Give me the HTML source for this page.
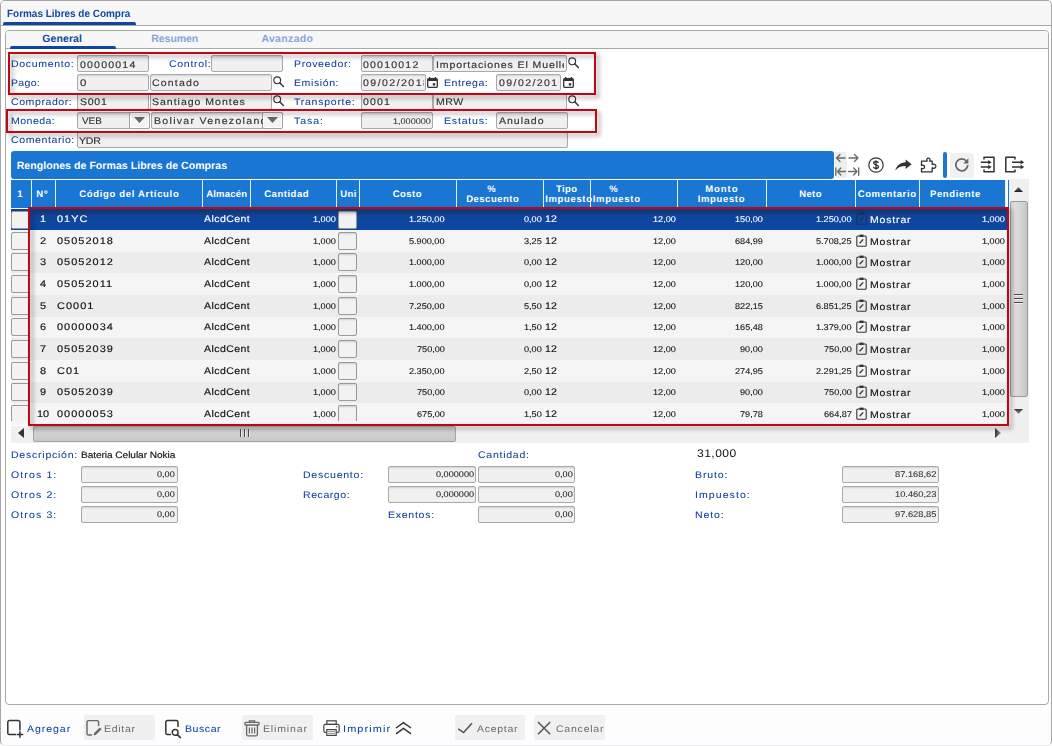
<!DOCTYPE html>
<html><head><meta charset="utf-8"><title>Formas Libres de Compra</title>
<style>
html,body{margin:0;padding:0}
body{width:1052px;height:746px;position:relative;overflow:hidden;background:#fdfdfd;font-family:"Liberation Sans",sans-serif}
div,span.t,svg{position:absolute;box-sizing:border-box}
span.t{white-space:pre;transform-origin:0 0;text-rendering:geometricPrecision}
.cl{overflow:hidden}
.in{background:#f0f0f0;border:1px solid #a9a9a9;border-radius:2px;box-shadow:inset 0 2px 2px -1px rgba(0,0,0,.13)}
.red{border:2px solid #be0712;filter:drop-shadow(3px 3px 2px rgba(0,0,0,.38))}
.btn{background:#f0f0f0;border-radius:2px}

</style></head>
<body>
<div class="" style="left:0px;top:0px;width:1052px;height:746px;border:1px solid #a6a6a6;border-bottom-color:#e6e9ee;border-radius:5px;background:#fdfdfd"></div>
<div class="" style="left:1px;top:1px;width:1050px;height:24px;background:#f7f7f7;border-radius:4px 4px 0 0"></div>
<div class="" style="left:1px;top:25px;width:1050px;height:1px;background:#a6a6a6"></div>
<div class="" style="left:1px;top:26px;width:1050px;height:679px;background:#fff"></div>
<div class="" style="left:3px;top:22px;width:133px;height:3px;background:#0d47a1;border-radius:2px 2px 0 0"></div>
<div class="" style="left:5px;top:30px;width:1044px;height:675px;border:1px solid #a9a9a9;border-radius:4px;background:#fff"></div>
<div class="" style="left:6px;top:31px;width:1042px;height:17px;background:#f7f7f7;border-radius:3px 3px 0 0"></div>
<div class="" style="left:6px;top:48px;width:1042px;height:1px;background:#a9a9a9"></div>
<div class="" style="left:10px;top:46px;width:106px;height:3px;background:#0d47a1;border-radius:2px 2px 0 0"></div>
<div class="in" style="left:77px;top:55px;width:72px;height:17px;"></div>
<div class="in" style="left:211px;top:55px;width:72px;height:17px;"></div>
<div class="in" style="left:361px;top:55px;width:72px;height:17px;"></div>
<div class="in" style="left:433px;top:55px;width:134px;height:17px;"></div>
<div class="in" style="left:77px;top:74px;width:72px;height:17px;"></div>
<div class="in" style="left:150px;top:74px;width:122px;height:17px;"></div>
<div class="in" style="left:361px;top:74px;width:65px;height:17px;"></div>
<div class="in" style="left:496px;top:74px;width:65px;height:17px;"></div>
<div class="in" style="left:77px;top:93px;width:72px;height:17px;"></div>
<div class="in" style="left:150px;top:93px;width:122px;height:17px;"></div>
<div class="in" style="left:361px;top:93px;width:72px;height:17px;"></div>
<div class="in" style="left:433px;top:93px;width:134px;height:17px;"></div>
<div class="in" style="left:77px;top:112px;width:73px;height:17px;"></div>
<div class="in" style="left:151px;top:112px;width:132px;height:17px;"></div>
<div class="in" style="left:361px;top:112px;width:72px;height:17px;"></div>
<div class="in" style="left:496px;top:112px;width:72px;height:17px;"></div>
<div class="in" style="left:77px;top:131px;width:491px;height:17px;"></div>
<div class="" style="left:129px;top:112px;width:21px;height:17px;background:#f4f4f4;border:1px solid #a0a0a0;border-radius:2px;box-shadow:inset 0 0 0 1px #fff"></div>
<svg style="left:134px;top:117px" width="11" height="6" viewBox="0 0 11 6"><path d="M0 0H11L5.5 6Z" fill="#666"/></svg>
<div class="" style="left:262px;top:112px;width:21px;height:17px;background:#f4f4f4;border:1px solid #a0a0a0;border-radius:2px;box-shadow:inset 0 0 0 1px #fff"></div>
<svg style="left:267px;top:117px" width="11" height="6" viewBox="0 0 11 6"><path d="M0 0H11L5.5 6Z" fill="#666"/></svg>
<div class="" style="left:11px;top:151px;width:823px;height:28px;background:#1976d2;border-radius:3px"></div>
<div class="" style="left:11px;top:180px;width:995px;height:28px;background:#1976d2"></div>
<div class="" style="left:31px;top:180px;width:1px;height:28px;background:#e3eefa"></div>
<div class="" style="left:55px;top:180px;width:1px;height:28px;background:#e3eefa"></div>
<div class="" style="left:202px;top:180px;width:1px;height:28px;background:#e3eefa"></div>
<div class="" style="left:250px;top:180px;width:1px;height:28px;background:#e3eefa"></div>
<div class="" style="left:336px;top:180px;width:1px;height:28px;background:#e3eefa"></div>
<div class="" style="left:359px;top:180px;width:1px;height:28px;background:#e3eefa"></div>
<div class="" style="left:456px;top:180px;width:1px;height:28px;background:#e3eefa"></div>
<div class="" style="left:543px;top:180px;width:1px;height:28px;background:#e3eefa"></div>
<div class="" style="left:590px;top:180px;width:1px;height:28px;background:#e3eefa"></div>
<div class="" style="left:677px;top:180px;width:1px;height:28px;background:#e3eefa"></div>
<div class="" style="left:766px;top:180px;width:1px;height:28px;background:#e3eefa"></div>
<div class="" style="left:855px;top:180px;width:1px;height:28px;background:#e3eefa"></div>
<div class="" style="left:919px;top:180px;width:1px;height:28px;background:#e3eefa"></div>
<div class="" style="left:1005px;top:180px;width:1px;height:28px;background:#e3eefa"></div>
<div class="" style="left:1008px;top:180px;width:1px;height:28px;background:#1976d2"></div>
<div class="" style="left:11px;top:209px;width:997px;height:21px;background:linear-gradient(#153f8b,#0d47a1 55%,#0d47a1)"></div>
<div class="" style="left:11px;top:210.5px;width:19px;height:18.0px;background:#f2f2f2;border:1px solid #999;border-radius:2px"></div>
<div class="" style="left:338px;top:210.5px;width:19px;height:18.0px;background:#f2f2f2;border:1px solid #999;border-radius:2px;box-shadow:inset 0 2px 2px -1px rgba(0,0,0,.15)"></div>
<svg style="left:856px;top:212px" width="11" height="13" viewBox="0 0 11 13" fill="none" stroke="#1d2f55" stroke-width="1.1"><rect x="0.8" y="2" width="9.4" height="10.2" rx="1"/><rect x="3.5" y="0.6" width="4" height="2.4" fill="#1d2f55" stroke="none"/><path d="M3.6 9.2L7.2 5.4" stroke-width="1.3"/></svg>
<div class="" style="left:11px;top:230px;width:997px;height:21.5px;background:#f5f5f5"></div>
<div class="" style="left:11px;top:231.5px;width:19px;height:18.0px;background:#f2f2f2;border:1px solid #999;border-radius:2px"></div>
<div class="" style="left:338px;top:231.5px;width:19px;height:18.0px;background:#f2f2f2;border:1px solid #999;border-radius:2px;box-shadow:inset 0 2px 2px -1px rgba(0,0,0,.15)"></div>
<svg style="left:856px;top:234px" width="11" height="13" viewBox="0 0 11 13" fill="none" stroke="#333" stroke-width="1.1"><rect x="0.8" y="2" width="9.4" height="10.2" rx="1"/><rect x="3.5" y="0.6" width="4" height="2.4" fill="#333" stroke="none"/><path d="M3.6 9.2L7.2 5.4" stroke-width="1.3"/></svg>
<div class="" style="left:11px;top:251.5px;width:997px;height:21.5px;background:#ececec"></div>
<div class="" style="left:11px;top:253.0px;width:19px;height:18.0px;background:#f2f2f2;border:1px solid #999;border-radius:2px"></div>
<div class="" style="left:338px;top:253.0px;width:19px;height:18.0px;background:#f2f2f2;border:1px solid #999;border-radius:2px;box-shadow:inset 0 2px 2px -1px rgba(0,0,0,.15)"></div>
<svg style="left:856px;top:255px" width="11" height="13" viewBox="0 0 11 13" fill="none" stroke="#333" stroke-width="1.1"><rect x="0.8" y="2" width="9.4" height="10.2" rx="1"/><rect x="3.5" y="0.6" width="4" height="2.4" fill="#333" stroke="none"/><path d="M3.6 9.2L7.2 5.4" stroke-width="1.3"/></svg>
<div class="" style="left:11px;top:273px;width:997px;height:22px;background:#f5f5f5"></div>
<div class="" style="left:11px;top:274.5px;width:19px;height:18.0px;background:#f2f2f2;border:1px solid #999;border-radius:2px"></div>
<div class="" style="left:338px;top:274.5px;width:19px;height:18.0px;background:#f2f2f2;border:1px solid #999;border-radius:2px;box-shadow:inset 0 2px 2px -1px rgba(0,0,0,.15)"></div>
<svg style="left:856px;top:277px" width="11" height="13" viewBox="0 0 11 13" fill="none" stroke="#333" stroke-width="1.1"><rect x="0.8" y="2" width="9.4" height="10.2" rx="1"/><rect x="3.5" y="0.6" width="4" height="2.4" fill="#333" stroke="none"/><path d="M3.6 9.2L7.2 5.4" stroke-width="1.3"/></svg>
<div class="" style="left:11px;top:295px;width:997px;height:21.5px;background:#ececec"></div>
<div class="" style="left:11px;top:296.5px;width:19px;height:18.0px;background:#f2f2f2;border:1px solid #999;border-radius:2px"></div>
<div class="" style="left:338px;top:296.5px;width:19px;height:18.0px;background:#f2f2f2;border:1px solid #999;border-radius:2px;box-shadow:inset 0 2px 2px -1px rgba(0,0,0,.15)"></div>
<svg style="left:856px;top:299px" width="11" height="13" viewBox="0 0 11 13" fill="none" stroke="#333" stroke-width="1.1"><rect x="0.8" y="2" width="9.4" height="10.2" rx="1"/><rect x="3.5" y="0.6" width="4" height="2.4" fill="#333" stroke="none"/><path d="M3.6 9.2L7.2 5.4" stroke-width="1.3"/></svg>
<div class="" style="left:11px;top:316.5px;width:997px;height:21.5px;background:#f5f5f5"></div>
<div class="" style="left:11px;top:318.0px;width:19px;height:18.0px;background:#f2f2f2;border:1px solid #999;border-radius:2px"></div>
<div class="" style="left:338px;top:318.0px;width:19px;height:18.0px;background:#f2f2f2;border:1px solid #999;border-radius:2px;box-shadow:inset 0 2px 2px -1px rgba(0,0,0,.15)"></div>
<svg style="left:856px;top:320px" width="11" height="13" viewBox="0 0 11 13" fill="none" stroke="#333" stroke-width="1.1"><rect x="0.8" y="2" width="9.4" height="10.2" rx="1"/><rect x="3.5" y="0.6" width="4" height="2.4" fill="#333" stroke="none"/><path d="M3.6 9.2L7.2 5.4" stroke-width="1.3"/></svg>
<div class="" style="left:11px;top:338px;width:997px;height:22px;background:#ececec"></div>
<div class="" style="left:11px;top:339.5px;width:19px;height:18.0px;background:#f2f2f2;border:1px solid #999;border-radius:2px"></div>
<div class="" style="left:338px;top:339.5px;width:19px;height:18.0px;background:#f2f2f2;border:1px solid #999;border-radius:2px;box-shadow:inset 0 2px 2px -1px rgba(0,0,0,.15)"></div>
<svg style="left:856px;top:342px" width="11" height="13" viewBox="0 0 11 13" fill="none" stroke="#333" stroke-width="1.1"><rect x="0.8" y="2" width="9.4" height="10.2" rx="1"/><rect x="3.5" y="0.6" width="4" height="2.4" fill="#333" stroke="none"/><path d="M3.6 9.2L7.2 5.4" stroke-width="1.3"/></svg>
<div class="" style="left:11px;top:360px;width:997px;height:21.5px;background:#f5f5f5"></div>
<div class="" style="left:11px;top:361.5px;width:19px;height:18.0px;background:#f2f2f2;border:1px solid #999;border-radius:2px"></div>
<div class="" style="left:338px;top:361.5px;width:19px;height:18.0px;background:#f2f2f2;border:1px solid #999;border-radius:2px;box-shadow:inset 0 2px 2px -1px rgba(0,0,0,.15)"></div>
<svg style="left:856px;top:364px" width="11" height="13" viewBox="0 0 11 13" fill="none" stroke="#333" stroke-width="1.1"><rect x="0.8" y="2" width="9.4" height="10.2" rx="1"/><rect x="3.5" y="0.6" width="4" height="2.4" fill="#333" stroke="none"/><path d="M3.6 9.2L7.2 5.4" stroke-width="1.3"/></svg>
<div class="" style="left:11px;top:381.5px;width:997px;height:21.5px;background:#ececec"></div>
<div class="" style="left:11px;top:383.0px;width:19px;height:18.0px;background:#f2f2f2;border:1px solid #999;border-radius:2px"></div>
<div class="" style="left:338px;top:383.0px;width:19px;height:18.0px;background:#f2f2f2;border:1px solid #999;border-radius:2px;box-shadow:inset 0 2px 2px -1px rgba(0,0,0,.15)"></div>
<svg style="left:856px;top:385px" width="11" height="13" viewBox="0 0 11 13" fill="none" stroke="#333" stroke-width="1.1"><rect x="0.8" y="2" width="9.4" height="10.2" rx="1"/><rect x="3.5" y="0.6" width="4" height="2.4" fill="#333" stroke="none"/><path d="M3.6 9.2L7.2 5.4" stroke-width="1.3"/></svg>
<div class="" style="left:11px;top:403px;width:997px;height:21.5px;background:#f5f5f5"></div>
<div class="" style="left:11px;top:404.5px;width:19px;height:16.5px;background:#f2f2f2;border:1px solid #999;border-radius:2px;border-bottom:0;border-radius:2px 2px 0 0"></div>
<div class="" style="left:338px;top:404.5px;width:19px;height:16.5px;background:#f2f2f2;border:1px solid #999;border-radius:2px;box-shadow:inset 0 2px 2px -1px rgba(0,0,0,.15);border-bottom:0;border-radius:2px 2px 0 0"></div>
<svg style="left:856px;top:407px" width="11" height="13" viewBox="0 0 11 13" fill="none" stroke="#333" stroke-width="1.1"><rect x="0.8" y="2" width="9.4" height="10.2" rx="1"/><rect x="3.5" y="0.6" width="4" height="2.4" fill="#333" stroke="none"/><path d="M3.6 9.2L7.2 5.4" stroke-width="1.3"/></svg>
<div class="" style="left:1009px;top:179px;width:20px;height:264px;background:#f0f0f0"></div>
<div class="" style="left:1009.5px;top:201px;width:18.5px;height:196px;background:linear-gradient(90deg,#cfcfcf,#dedede 25%,#dadada 35%,#d2d2d2 70%,#c2c2c2);border:1px solid #9c9c9c;border-radius:2px"></div>
<svg style="left:1014px;top:187px" width="9" height="5" viewBox="0 0 9 5"><defs><linearGradient id="ga" x1="0" y1="0" x2="0" y2="1"><stop offset="0" stop-color="#777"/><stop offset="1" stop-color="#1a1a1a"/></linearGradient></defs><path d="M0 5H9L4.5 0Z" fill="url(#ga)"/></svg>
<svg style="left:1014px;top:409px" width="9" height="5" viewBox="0 0 9 5"><defs><linearGradient id="gb" x1="0" y1="0" x2="0" y2="1"><stop offset="0" stop-color="#333"/><stop offset="1" stop-color="#999"/></linearGradient></defs><path d="M0 0H9L4.5 5Z" fill="url(#gb)"/></svg>
<div class="" style="left:1014px;top:293.5px;width:9px;height:1.0px;background:#4a4a4a"></div>
<div class="" style="left:1014px;top:294.5px;width:9px;height:1.0px;background:#eee"></div>
<div class="" style="left:1014px;top:297.5px;width:9px;height:1.0px;background:#4a4a4a"></div>
<div class="" style="left:1014px;top:298.5px;width:9px;height:1.0px;background:#eee"></div>
<div class="" style="left:1014px;top:301.5px;width:9px;height:1.0px;background:#4a4a4a"></div>
<div class="" style="left:1014px;top:302.5px;width:9px;height:1.0px;background:#eee"></div>
<div class="" style="left:11px;top:426px;width:998px;height:17px;background:#f0f0f0"></div>
<div class="" style="left:33px;top:426px;width:423px;height:15.5px;background:linear-gradient(#c4c4c4,#d2d2d2 35%,#cecece 60%,#c8c8c8);border:1px solid #a4a4a4;border-radius:2px"></div>
<div class="" style="left:239.5px;top:428.5px;width:1.0px;height:8.0px;background:#4a4a4a"></div>
<div class="" style="left:240.5px;top:428.5px;width:1.0px;height:8.0px;background:#e8e8e8"></div>
<div class="" style="left:243.5px;top:428.5px;width:1.0px;height:8.0px;background:#4a4a4a"></div>
<div class="" style="left:244.5px;top:428.5px;width:1.0px;height:8.0px;background:#e8e8e8"></div>
<div class="" style="left:247.5px;top:428.5px;width:1.0px;height:8.0px;background:#4a4a4a"></div>
<div class="" style="left:248.5px;top:428.5px;width:1.0px;height:8.0px;background:#e8e8e8"></div>
<svg style="left:18px;top:428px" width="6" height="10" viewBox="0 0 6 10"><path d="M6 0V10L0 5Z" fill="#333"/></svg>
<svg style="left:994.5px;top:428px" width="6" height="10" viewBox="0 0 6 10"><defs><linearGradient id="gc" x1="0" y1="0" x2="1" y2="0"><stop offset="0" stop-color="#333"/><stop offset="1" stop-color="#999"/></linearGradient></defs><path d="M0 0V10L6 5Z" fill="url(#gc)"/></svg>
<div class="in" style="left:81px;top:466px;width:97px;height:17px;"></div>
<div class="in" style="left:478px;top:466px;width:97px;height:17px;"></div>
<div class="in" style="left:842px;top:466px;width:97px;height:17px;"></div>
<div class="in" style="left:81px;top:486px;width:97px;height:17px;"></div>
<div class="in" style="left:478px;top:486px;width:97px;height:17px;"></div>
<div class="in" style="left:842px;top:486px;width:97px;height:17px;"></div>
<div class="in" style="left:81px;top:506px;width:97px;height:17px;"></div>
<div class="in" style="left:478px;top:506px;width:97px;height:17px;"></div>
<div class="in" style="left:842px;top:506px;width:97px;height:17px;"></div>
<div class="in" style="left:388px;top:466px;width:88px;height:17px;"></div>
<div class="in" style="left:388px;top:486px;width:88px;height:17px;"></div>
<div class="btn" style="left:84px;top:715px;width:71px;height:25px;"></div>
<div class="btn" style="left:242px;top:715px;width:71px;height:25px;"></div>
<div class="btn" style="left:455px;top:715px;width:70px;height:25px;"></div>
<div class="btn" style="left:534px;top:715px;width:71px;height:25px;"></div>
<span class="t" style="left:7.20px;top:6.86px;font-size:10.5px;line-height:14.5px;color:#0d47a1;font-weight:bold;transform:scaleX(0.9476);">Formas Libres de Compra</span>
<span class="t" style="left:42.20px;top:31.86px;font-size:10.5px;line-height:14.5px;color:#0d47a1;font-weight:bold;letter-spacing:0.115px;">General</span>
<span class="t" style="left:151.30px;top:31.86px;font-size:10.5px;line-height:14.5px;color:#86a4d9;font-weight:bold;letter-spacing:-0.061px;">Resumen</span>
<span class="t" style="left:261.40px;top:31.86px;font-size:10.5px;line-height:14.5px;color:#86a4d9;font-weight:bold;letter-spacing:0.340px;">Avanzado</span>
<span class="t" style="left:11.00px;top:57.62px;font-size:9.6px;line-height:13.6px;color:#123f9c;-webkit-text-stroke:0.06px #123f9c;letter-spacing:0.595px;transform:scaleX(1.1000);">Documento:</span>
<span class="t" style="left:11.00px;top:76.62px;font-size:9.6px;line-height:13.6px;color:#123f9c;-webkit-text-stroke:0.06px #123f9c;letter-spacing:0.276px;transform:scaleX(1.1000);">Pago:</span>
<span class="t" style="left:11.00px;top:95.62px;font-size:9.6px;line-height:13.6px;color:#123f9c;-webkit-text-stroke:0.06px #123f9c;letter-spacing:0.513px;transform:scaleX(1.1000);">Comprador:</span>
<span class="t" style="left:11.00px;top:114.62px;font-size:9.6px;line-height:13.6px;color:#123f9c;-webkit-text-stroke:0.06px #123f9c;letter-spacing:0.412px;transform:scaleX(1.1000);">Moneda:</span>
<span class="t" style="left:11.00px;top:133.62px;font-size:9.6px;line-height:13.6px;color:#123f9c;-webkit-text-stroke:0.06px #123f9c;letter-spacing:0.528px;transform:scaleX(1.1000);">Comentario:</span>
<span class="t" style="left:168.80px;top:57.62px;font-size:9.6px;line-height:13.6px;color:#123f9c;-webkit-text-stroke:0.06px #123f9c;letter-spacing:0.629px;transform:scaleX(1.1000);">Control:</span>
<span class="t" style="left:294.00px;top:57.62px;font-size:9.6px;line-height:13.6px;color:#123f9c;-webkit-text-stroke:0.06px #123f9c;letter-spacing:0.547px;transform:scaleX(1.1000);">Proveedor:</span>
<span class="t" style="left:294.00px;top:76.62px;font-size:9.6px;line-height:13.6px;color:#123f9c;-webkit-text-stroke:0.06px #123f9c;letter-spacing:0.529px;transform:scaleX(1.1000);">Emisión:</span>
<span class="t" style="left:294.00px;top:95.62px;font-size:9.6px;line-height:13.6px;color:#123f9c;-webkit-text-stroke:0.06px #123f9c;letter-spacing:0.657px;transform:scaleX(1.1000);">Transporte:</span>
<span class="t" style="left:294.00px;top:114.62px;font-size:9.6px;line-height:13.6px;color:#123f9c;-webkit-text-stroke:0.06px #123f9c;letter-spacing:0.868px;transform:scaleX(1.1000);">Tasa:</span>
<span class="t" style="left:444.00px;top:76.62px;font-size:9.6px;line-height:13.6px;color:#123f9c;-webkit-text-stroke:0.06px #123f9c;letter-spacing:0.505px;transform:scaleX(1.1000);">Entrega:</span>
<span class="t" style="left:444.00px;top:114.62px;font-size:9.6px;line-height:13.6px;color:#123f9c;-webkit-text-stroke:0.06px #123f9c;letter-spacing:0.735px;transform:scaleX(1.1000);">Estatus:</span>
<span class="t" style="left:11.00px;top:448.62px;font-size:9.6px;line-height:13.6px;color:#123f9c;-webkit-text-stroke:0.06px #123f9c;letter-spacing:0.680px;transform:scaleX(1.1000);">Descripción:</span>
<span class="t" style="left:11.00px;top:468.62px;font-size:9.6px;line-height:13.6px;color:#123f9c;-webkit-text-stroke:0.06px #123f9c;letter-spacing:1.008px;transform:scaleX(1.1000);">Otros 1:</span>
<span class="t" style="left:11.00px;top:488.62px;font-size:9.6px;line-height:13.6px;color:#123f9c;-webkit-text-stroke:0.06px #123f9c;letter-spacing:1.008px;transform:scaleX(1.1000);">Otros 2:</span>
<span class="t" style="left:11.00px;top:508.62px;font-size:9.6px;line-height:13.6px;color:#123f9c;-webkit-text-stroke:0.06px #123f9c;letter-spacing:1.008px;transform:scaleX(1.1000);">Otros 3:</span>
<span class="t" style="left:302.70px;top:468.62px;font-size:9.6px;line-height:13.6px;color:#123f9c;-webkit-text-stroke:0.06px #123f9c;letter-spacing:0.678px;transform:scaleX(1.1000);">Descuento:</span>
<span class="t" style="left:302.70px;top:488.62px;font-size:9.6px;line-height:13.6px;color:#123f9c;-webkit-text-stroke:0.06px #123f9c;letter-spacing:0.489px;transform:scaleX(1.1000);">Recargo:</span>
<span class="t" style="left:387.70px;top:508.62px;font-size:9.6px;line-height:13.6px;color:#123f9c;-webkit-text-stroke:0.06px #123f9c;letter-spacing:0.652px;transform:scaleX(1.1000);">Exentos:</span>
<span class="t" style="left:477.80px;top:448.62px;font-size:9.6px;line-height:13.6px;color:#123f9c;-webkit-text-stroke:0.06px #123f9c;letter-spacing:0.661px;transform:scaleX(1.1000);">Cantidad:</span>
<span class="t" style="left:694.50px;top:468.62px;font-size:9.6px;line-height:13.6px;color:#123f9c;-webkit-text-stroke:0.06px #123f9c;letter-spacing:0.787px;transform:scaleX(1.1000);">Bruto:</span>
<span class="t" style="left:694.50px;top:488.62px;font-size:9.6px;line-height:13.6px;color:#123f9c;-webkit-text-stroke:0.06px #123f9c;letter-spacing:0.960px;transform:scaleX(1.1000);">Impuesto:</span>
<span class="t" style="left:694.50px;top:508.62px;font-size:9.6px;line-height:13.6px;color:#123f9c;-webkit-text-stroke:0.06px #123f9c;letter-spacing:0.766px;transform:scaleX(1.1000);">Neto:</span>
<span class="t" style="left:79.50px;top:58.62px;font-size:9.6px;line-height:13.6px;color:#333333;-webkit-text-stroke:0.15px #333333;letter-spacing:1.084px;transform:scaleX(1.1000);">00000014</span>
<span class="t" style="left:79.50px;top:77.12px;font-size:9.6px;line-height:13.6px;color:#333333;-webkit-text-stroke:0.15px #333333;transform:scaleX(1.2000);">0</span>
<span class="t" style="left:152.00px;top:77.12px;font-size:9.6px;line-height:13.6px;color:#333333;-webkit-text-stroke:0.15px #333333;letter-spacing:1.044px;transform:scaleX(1.1000);">Contado</span>
<span class="t" style="left:79.50px;top:96.12px;font-size:9.6px;line-height:13.6px;color:#333333;-webkit-text-stroke:0.15px #333333;letter-spacing:0.652px;transform:scaleX(1.1000);">S001</span>
<span class="t" style="left:152.00px;top:96.12px;font-size:9.6px;line-height:13.6px;color:#333333;-webkit-text-stroke:0.15px #333333;letter-spacing:0.883px;transform:scaleX(1.1000);">Santiago Montes</span>
<span class="t" style="left:81.50px;top:115.12px;font-size:9.6px;line-height:13.6px;color:#333333;-webkit-text-stroke:0.15px #333333;transform:scaleX(1.0311);">VEB</span>
<div class="cl" style="left:152px;top:115.12px;width:111px;height:13.6px"><span class="t" style="left:2.40px;top:0px;font-size:9.6px;line-height:13.6px;color:#333333;-webkit-text-stroke:0.15px #333333;letter-spacing:1.182px;transform:scaleX(1.1000);">Bolivar Venezolano</span></div>
<span class="t" style="left:78.50px;top:134.62px;font-size:9.6px;line-height:13.6px;color:#333333;-webkit-text-stroke:0.15px #333333;letter-spacing:-0.224px;transform:scaleX(1.1000);">YDR</span>
<span class="t" style="left:362.50px;top:58.62px;font-size:9.6px;line-height:13.6px;color:#333333;-webkit-text-stroke:0.15px #333333;letter-spacing:1.084px;transform:scaleX(1.1000);">00010012</span>
<div class="cl" style="left:434px;top:58.62px;width:130px;height:13.6px"><span class="t" style="left:1.80px;top:0px;font-size:9.6px;line-height:13.6px;color:#333333;-webkit-text-stroke:0.15px #333333;letter-spacing:0.799px;transform:scaleX(1.1000);">Importaciones El Muelle</span></div>
<div class="cl" style="left:362px;top:77.12px;width:61.5px;height:13.6px"><span class="t" style="left:0.50px;top:0px;font-size:9.6px;line-height:13.6px;color:#333333;-webkit-text-stroke:0.15px #333333;letter-spacing:1.317px;transform:scaleX(1.1000);">09/02/2018</span></div>
<div class="cl" style="left:497px;top:77.12px;width:61.60000000000002px;height:13.6px"><span class="t" style="left:1.80px;top:0px;font-size:9.6px;line-height:13.6px;color:#333333;-webkit-text-stroke:0.15px #333333;letter-spacing:1.278px;transform:scaleX(1.1000);">09/02/2018</span></div>
<span class="t" style="left:362.50px;top:96.12px;font-size:9.6px;line-height:13.6px;color:#333333;-webkit-text-stroke:0.15px #333333;letter-spacing:1.007px;transform:scaleX(1.1000);">0001</span>
<span class="t" style="left:435.50px;top:96.12px;font-size:9.6px;line-height:13.6px;color:#333333;-webkit-text-stroke:0.15px #333333;letter-spacing:0.503px;transform:scaleX(1.1000);">MRW</span>
<span class="t" style="left:392.70px;top:114.72px;font-size:8.3px;line-height:12.3px;color:#333333;-webkit-text-stroke:0.08px #333333;transform:scaleX(1.0922);">1,000000</span>
<span class="t" style="left:498.50px;top:115.12px;font-size:9.6px;line-height:13.6px;color:#333333;-webkit-text-stroke:0.15px #333333;letter-spacing:0.880px;transform:scaleX(1.1000);">Anulado</span>
<span class="t" style="left:16.70px;top:158.86px;font-size:10.5px;line-height:14.5px;color:#fff;font-weight:bold;letter-spacing:0.072px;">Renglones de Formas Libres de Compras</span>
<span class="t" style="left:17.20px;top:187.71px;font-size:9.5px;line-height:13.5px;color:#fff;font-weight:bold;">1</span>
<span class="t" style="left:36.20px;top:187.71px;font-size:9.5px;line-height:13.5px;color:#fff;font-weight:bold;letter-spacing:0.956px;">Nº</span>
<span class="t" style="left:79.20px;top:187.71px;font-size:9.5px;line-height:13.5px;color:#fff;font-weight:bold;letter-spacing:0.682px;">Código del Artículo</span>
<span class="t" style="left:206.20px;top:187.71px;font-size:9.5px;line-height:13.5px;color:#fff;font-weight:bold;letter-spacing:0.198px;">Almacén</span>
<span class="t" style="left:264.20px;top:187.71px;font-size:9.5px;line-height:13.5px;color:#fff;font-weight:bold;letter-spacing:0.523px;">Cantidad</span>
<span class="t" style="left:340.20px;top:187.71px;font-size:9.5px;line-height:13.5px;color:#fff;font-weight:bold;letter-spacing:0.494px;">Uni</span>
<span class="t" style="left:392.70px;top:187.71px;font-size:9.5px;line-height:13.5px;color:#fff;font-weight:bold;letter-spacing:0.470px;">Costo</span>
<span class="t" style="left:487.20px;top:182.71px;font-size:9.5px;line-height:13.5px;color:#fff;font-weight:bold;letter-spacing:1.347px;">%</span>
<span class="t" style="left:466.20px;top:192.71px;font-size:9.5px;line-height:13.5px;color:#fff;font-weight:bold;letter-spacing:0.496px;">Descuento</span>
<span class="t" style="left:555.95px;top:182.71px;font-size:9.5px;line-height:13.5px;color:#fff;font-weight:bold;letter-spacing:0.386px;">Tipo</span>
<span class="t" style="left:545.20px;top:192.71px;font-size:9.5px;line-height:13.5px;color:#fff;font-weight:bold;letter-spacing:0.652px;">Impuesto</span>
<span class="t" style="left:609.20px;top:182.71px;font-size:9.5px;line-height:13.5px;color:#fff;font-weight:bold;letter-spacing:1.347px;">%</span>
<span class="t" style="left:592.70px;top:192.71px;font-size:9.5px;line-height:13.5px;color:#fff;font-weight:bold;letter-spacing:0.724px;">Impuesto</span>
<span class="t" style="left:705.20px;top:182.71px;font-size:9.5px;line-height:13.5px;color:#fff;font-weight:bold;letter-spacing:0.950px;">Monto</span>
<span class="t" style="left:697.70px;top:192.71px;font-size:9.5px;line-height:13.5px;color:#fff;font-weight:bold;letter-spacing:0.652px;">Impuesto</span>
<span class="t" style="left:799.20px;top:187.71px;font-size:9.5px;line-height:13.5px;color:#fff;font-weight:bold;letter-spacing:0.392px;">Neto</span>
<span class="t" style="left:857.70px;top:187.71px;font-size:9.5px;line-height:13.5px;color:#fff;font-weight:bold;letter-spacing:0.611px;">Comentario</span>
<span class="t" style="left:930.00px;top:187.71px;font-size:9.5px;line-height:13.5px;color:#fff;font-weight:bold;letter-spacing:0.612px;">Pendiente</span>
<span class="t" style="left:40.15px;top:212.62px;font-size:9.6px;line-height:13.6px;color:#fff;-webkit-text-stroke:0.15px #fff;transform:scaleX(1.1400);">1</span>
<span class="t" style="left:56.50px;top:212.62px;font-size:9.6px;line-height:13.6px;color:#fff;-webkit-text-stroke:0.15px #fff;letter-spacing:0.900px;transform:scaleX(1.1400);">01YC</span>
<span class="t" style="left:203.50px;top:212.62px;font-size:9.6px;line-height:13.6px;color:#fff;-webkit-text-stroke:0.15px #fff;letter-spacing:0.386px;transform:scaleX(1.1000);">AlcdCent</span>
<span class="t" style="left:312.66px;top:212.72px;font-size:8.3px;line-height:12.3px;color:#fff;-webkit-text-stroke:0.1px #fff;transform:scaleX(1.1000);">1,000</span>
<span class="t" style="left:408.97px;top:212.72px;font-size:8.3px;line-height:12.3px;color:#fff;-webkit-text-stroke:0.1px #fff;transform:scaleX(1.1000);">1.250,00</span>
<span class="t" style="left:523.73px;top:212.72px;font-size:8.3px;line-height:12.3px;color:#fff;-webkit-text-stroke:0.1px #fff;transform:scaleX(1.1000);">0,00</span>
<span class="t" style="left:544.50px;top:212.62px;font-size:9.6px;line-height:13.6px;color:#fff;-webkit-text-stroke:0.15px #fff;letter-spacing:0.055px;transform:scaleX(1.1000);">12</span>
<span class="t" style="left:652.66px;top:212.72px;font-size:8.3px;line-height:12.3px;color:#fff;-webkit-text-stroke:0.1px #fff;transform:scaleX(1.1000);">12,00</span>
<span class="t" style="left:734.57px;top:212.72px;font-size:8.3px;line-height:12.3px;color:#fff;-webkit-text-stroke:0.1px #fff;transform:scaleX(1.1000);">150,00</span>
<span class="t" style="left:815.97px;top:212.72px;font-size:8.3px;line-height:12.3px;color:#fff;-webkit-text-stroke:0.1px #fff;transform:scaleX(1.1000);">1.250,00</span>
<span class="t" style="left:869.70px;top:213.62px;font-size:9.6px;line-height:13.6px;color:#fff;-webkit-text-stroke:0.15px #fff;letter-spacing:0.732px;transform:scaleX(1.1000);">Mostrar</span>
<span class="t" style="left:981.66px;top:212.72px;font-size:8.3px;line-height:12.3px;color:#fff;-webkit-text-stroke:0.1px #fff;transform:scaleX(1.1000);">1,000</span>
<span class="t" style="left:40.15px;top:234.62px;font-size:9.6px;line-height:13.6px;color:#111;-webkit-text-stroke:0.15px #111;transform:scaleX(1.1400);">2</span>
<span class="t" style="left:56.50px;top:234.62px;font-size:9.6px;line-height:13.6px;color:#111;-webkit-text-stroke:0.15px #111;letter-spacing:0.900px;transform:scaleX(1.1400);">05052018</span>
<span class="t" style="left:203.50px;top:234.62px;font-size:9.6px;line-height:13.6px;color:#111;-webkit-text-stroke:0.15px #111;letter-spacing:0.386px;transform:scaleX(1.1000);">AlcdCent</span>
<span class="t" style="left:312.66px;top:234.72px;font-size:8.3px;line-height:12.3px;color:#111;-webkit-text-stroke:0.1px #111;transform:scaleX(1.1000);">1,000</span>
<span class="t" style="left:408.97px;top:234.72px;font-size:8.3px;line-height:12.3px;color:#111;-webkit-text-stroke:0.1px #111;transform:scaleX(1.1000);">5.900,00</span>
<span class="t" style="left:523.73px;top:234.72px;font-size:8.3px;line-height:12.3px;color:#111;-webkit-text-stroke:0.1px #111;transform:scaleX(1.1000);">3,25</span>
<span class="t" style="left:544.50px;top:234.62px;font-size:9.6px;line-height:13.6px;color:#111;-webkit-text-stroke:0.15px #111;letter-spacing:0.055px;transform:scaleX(1.1000);">12</span>
<span class="t" style="left:652.66px;top:234.72px;font-size:8.3px;line-height:12.3px;color:#111;-webkit-text-stroke:0.1px #111;transform:scaleX(1.1000);">12,00</span>
<span class="t" style="left:734.57px;top:234.72px;font-size:8.3px;line-height:12.3px;color:#111;-webkit-text-stroke:0.1px #111;transform:scaleX(1.1000);">684,99</span>
<span class="t" style="left:815.97px;top:234.72px;font-size:8.3px;line-height:12.3px;color:#111;-webkit-text-stroke:0.1px #111;transform:scaleX(1.1000);">5.708,25</span>
<span class="t" style="left:869.70px;top:235.62px;font-size:9.6px;line-height:13.6px;color:#111;-webkit-text-stroke:0.15px #111;letter-spacing:0.732px;transform:scaleX(1.1000);">Mostrar</span>
<span class="t" style="left:981.66px;top:234.72px;font-size:8.3px;line-height:12.3px;color:#111;-webkit-text-stroke:0.1px #111;transform:scaleX(1.1000);">1,000</span>
<span class="t" style="left:40.15px;top:255.62px;font-size:9.6px;line-height:13.6px;color:#111;-webkit-text-stroke:0.15px #111;transform:scaleX(1.1400);">3</span>
<span class="t" style="left:56.50px;top:255.62px;font-size:9.6px;line-height:13.6px;color:#111;-webkit-text-stroke:0.15px #111;letter-spacing:0.900px;transform:scaleX(1.1400);">05052012</span>
<span class="t" style="left:203.50px;top:255.62px;font-size:9.6px;line-height:13.6px;color:#111;-webkit-text-stroke:0.15px #111;letter-spacing:0.386px;transform:scaleX(1.1000);">AlcdCent</span>
<span class="t" style="left:312.66px;top:255.72px;font-size:8.3px;line-height:12.3px;color:#111;-webkit-text-stroke:0.1px #111;transform:scaleX(1.1000);">1,000</span>
<span class="t" style="left:408.97px;top:255.72px;font-size:8.3px;line-height:12.3px;color:#111;-webkit-text-stroke:0.1px #111;transform:scaleX(1.1000);">1.000,00</span>
<span class="t" style="left:523.73px;top:255.72px;font-size:8.3px;line-height:12.3px;color:#111;-webkit-text-stroke:0.1px #111;transform:scaleX(1.1000);">0,00</span>
<span class="t" style="left:544.50px;top:255.62px;font-size:9.6px;line-height:13.6px;color:#111;-webkit-text-stroke:0.15px #111;letter-spacing:0.055px;transform:scaleX(1.1000);">12</span>
<span class="t" style="left:652.66px;top:255.72px;font-size:8.3px;line-height:12.3px;color:#111;-webkit-text-stroke:0.1px #111;transform:scaleX(1.1000);">12,00</span>
<span class="t" style="left:734.57px;top:255.72px;font-size:8.3px;line-height:12.3px;color:#111;-webkit-text-stroke:0.1px #111;transform:scaleX(1.1000);">120,00</span>
<span class="t" style="left:815.97px;top:255.72px;font-size:8.3px;line-height:12.3px;color:#111;-webkit-text-stroke:0.1px #111;transform:scaleX(1.1000);">1.000,00</span>
<span class="t" style="left:869.70px;top:256.62px;font-size:9.6px;line-height:13.6px;color:#111;-webkit-text-stroke:0.15px #111;letter-spacing:0.732px;transform:scaleX(1.1000);">Mostrar</span>
<span class="t" style="left:981.66px;top:255.72px;font-size:8.3px;line-height:12.3px;color:#111;-webkit-text-stroke:0.1px #111;transform:scaleX(1.1000);">1,000</span>
<span class="t" style="left:40.15px;top:277.62px;font-size:9.6px;line-height:13.6px;color:#111;-webkit-text-stroke:0.15px #111;transform:scaleX(1.1400);">4</span>
<span class="t" style="left:56.50px;top:277.62px;font-size:9.6px;line-height:13.6px;color:#111;-webkit-text-stroke:0.15px #111;letter-spacing:0.900px;transform:scaleX(1.1400);">05052011</span>
<span class="t" style="left:203.50px;top:277.62px;font-size:9.6px;line-height:13.6px;color:#111;-webkit-text-stroke:0.15px #111;letter-spacing:0.386px;transform:scaleX(1.1000);">AlcdCent</span>
<span class="t" style="left:312.66px;top:277.72px;font-size:8.3px;line-height:12.3px;color:#111;-webkit-text-stroke:0.1px #111;transform:scaleX(1.1000);">1,000</span>
<span class="t" style="left:408.97px;top:277.72px;font-size:8.3px;line-height:12.3px;color:#111;-webkit-text-stroke:0.1px #111;transform:scaleX(1.1000);">1.000,00</span>
<span class="t" style="left:523.73px;top:277.72px;font-size:8.3px;line-height:12.3px;color:#111;-webkit-text-stroke:0.1px #111;transform:scaleX(1.1000);">0,00</span>
<span class="t" style="left:544.50px;top:277.62px;font-size:9.6px;line-height:13.6px;color:#111;-webkit-text-stroke:0.15px #111;letter-spacing:0.055px;transform:scaleX(1.1000);">12</span>
<span class="t" style="left:652.66px;top:277.72px;font-size:8.3px;line-height:12.3px;color:#111;-webkit-text-stroke:0.1px #111;transform:scaleX(1.1000);">12,00</span>
<span class="t" style="left:734.57px;top:277.72px;font-size:8.3px;line-height:12.3px;color:#111;-webkit-text-stroke:0.1px #111;transform:scaleX(1.1000);">120,00</span>
<span class="t" style="left:815.97px;top:277.72px;font-size:8.3px;line-height:12.3px;color:#111;-webkit-text-stroke:0.1px #111;transform:scaleX(1.1000);">1.000,00</span>
<span class="t" style="left:869.70px;top:278.62px;font-size:9.6px;line-height:13.6px;color:#111;-webkit-text-stroke:0.15px #111;letter-spacing:0.732px;transform:scaleX(1.1000);">Mostrar</span>
<span class="t" style="left:981.66px;top:277.72px;font-size:8.3px;line-height:12.3px;color:#111;-webkit-text-stroke:0.1px #111;transform:scaleX(1.1000);">1,000</span>
<span class="t" style="left:40.15px;top:299.62px;font-size:9.6px;line-height:13.6px;color:#111;-webkit-text-stroke:0.15px #111;transform:scaleX(1.1400);">5</span>
<span class="t" style="left:56.50px;top:299.62px;font-size:9.6px;line-height:13.6px;color:#111;-webkit-text-stroke:0.15px #111;letter-spacing:0.900px;transform:scaleX(1.1400);">C0001</span>
<span class="t" style="left:203.50px;top:299.62px;font-size:9.6px;line-height:13.6px;color:#111;-webkit-text-stroke:0.15px #111;letter-spacing:0.386px;transform:scaleX(1.1000);">AlcdCent</span>
<span class="t" style="left:312.66px;top:299.72px;font-size:8.3px;line-height:12.3px;color:#111;-webkit-text-stroke:0.1px #111;transform:scaleX(1.1000);">1,000</span>
<span class="t" style="left:408.97px;top:299.72px;font-size:8.3px;line-height:12.3px;color:#111;-webkit-text-stroke:0.1px #111;transform:scaleX(1.1000);">7.250,00</span>
<span class="t" style="left:523.73px;top:299.72px;font-size:8.3px;line-height:12.3px;color:#111;-webkit-text-stroke:0.1px #111;transform:scaleX(1.1000);">5,50</span>
<span class="t" style="left:544.50px;top:299.62px;font-size:9.6px;line-height:13.6px;color:#111;-webkit-text-stroke:0.15px #111;letter-spacing:0.055px;transform:scaleX(1.1000);">12</span>
<span class="t" style="left:652.66px;top:299.72px;font-size:8.3px;line-height:12.3px;color:#111;-webkit-text-stroke:0.1px #111;transform:scaleX(1.1000);">12,00</span>
<span class="t" style="left:734.57px;top:299.72px;font-size:8.3px;line-height:12.3px;color:#111;-webkit-text-stroke:0.1px #111;transform:scaleX(1.1000);">822,15</span>
<span class="t" style="left:815.97px;top:299.72px;font-size:8.3px;line-height:12.3px;color:#111;-webkit-text-stroke:0.1px #111;transform:scaleX(1.1000);">6.851,25</span>
<span class="t" style="left:869.70px;top:300.62px;font-size:9.6px;line-height:13.6px;color:#111;-webkit-text-stroke:0.15px #111;letter-spacing:0.732px;transform:scaleX(1.1000);">Mostrar</span>
<span class="t" style="left:981.66px;top:299.72px;font-size:8.3px;line-height:12.3px;color:#111;-webkit-text-stroke:0.1px #111;transform:scaleX(1.1000);">1,000</span>
<span class="t" style="left:40.15px;top:320.62px;font-size:9.6px;line-height:13.6px;color:#111;-webkit-text-stroke:0.15px #111;transform:scaleX(1.1400);">6</span>
<span class="t" style="left:56.50px;top:320.62px;font-size:9.6px;line-height:13.6px;color:#111;-webkit-text-stroke:0.15px #111;letter-spacing:0.900px;transform:scaleX(1.1400);">00000034</span>
<span class="t" style="left:203.50px;top:320.62px;font-size:9.6px;line-height:13.6px;color:#111;-webkit-text-stroke:0.15px #111;letter-spacing:0.386px;transform:scaleX(1.1000);">AlcdCent</span>
<span class="t" style="left:312.66px;top:320.72px;font-size:8.3px;line-height:12.3px;color:#111;-webkit-text-stroke:0.1px #111;transform:scaleX(1.1000);">1,000</span>
<span class="t" style="left:408.97px;top:320.72px;font-size:8.3px;line-height:12.3px;color:#111;-webkit-text-stroke:0.1px #111;transform:scaleX(1.1000);">1.400,00</span>
<span class="t" style="left:523.73px;top:320.72px;font-size:8.3px;line-height:12.3px;color:#111;-webkit-text-stroke:0.1px #111;transform:scaleX(1.1000);">1,50</span>
<span class="t" style="left:544.50px;top:320.62px;font-size:9.6px;line-height:13.6px;color:#111;-webkit-text-stroke:0.15px #111;letter-spacing:0.055px;transform:scaleX(1.1000);">12</span>
<span class="t" style="left:652.66px;top:320.72px;font-size:8.3px;line-height:12.3px;color:#111;-webkit-text-stroke:0.1px #111;transform:scaleX(1.1000);">12,00</span>
<span class="t" style="left:734.57px;top:320.72px;font-size:8.3px;line-height:12.3px;color:#111;-webkit-text-stroke:0.1px #111;transform:scaleX(1.1000);">165,48</span>
<span class="t" style="left:815.97px;top:320.72px;font-size:8.3px;line-height:12.3px;color:#111;-webkit-text-stroke:0.1px #111;transform:scaleX(1.1000);">1.379,00</span>
<span class="t" style="left:869.70px;top:321.62px;font-size:9.6px;line-height:13.6px;color:#111;-webkit-text-stroke:0.15px #111;letter-spacing:0.732px;transform:scaleX(1.1000);">Mostrar</span>
<span class="t" style="left:981.66px;top:320.72px;font-size:8.3px;line-height:12.3px;color:#111;-webkit-text-stroke:0.1px #111;transform:scaleX(1.1000);">1,000</span>
<span class="t" style="left:40.15px;top:342.62px;font-size:9.6px;line-height:13.6px;color:#111;-webkit-text-stroke:0.15px #111;transform:scaleX(1.1400);">7</span>
<span class="t" style="left:56.50px;top:342.62px;font-size:9.6px;line-height:13.6px;color:#111;-webkit-text-stroke:0.15px #111;letter-spacing:0.900px;transform:scaleX(1.1400);">05052039</span>
<span class="t" style="left:203.50px;top:342.62px;font-size:9.6px;line-height:13.6px;color:#111;-webkit-text-stroke:0.15px #111;letter-spacing:0.386px;transform:scaleX(1.1000);">AlcdCent</span>
<span class="t" style="left:312.66px;top:342.72px;font-size:8.3px;line-height:12.3px;color:#111;-webkit-text-stroke:0.1px #111;transform:scaleX(1.1000);">1,000</span>
<span class="t" style="left:416.57px;top:342.72px;font-size:8.3px;line-height:12.3px;color:#111;-webkit-text-stroke:0.1px #111;transform:scaleX(1.1000);">750,00</span>
<span class="t" style="left:523.73px;top:342.72px;font-size:8.3px;line-height:12.3px;color:#111;-webkit-text-stroke:0.1px #111;transform:scaleX(1.1000);">0,00</span>
<span class="t" style="left:544.50px;top:342.62px;font-size:9.6px;line-height:13.6px;color:#111;-webkit-text-stroke:0.15px #111;letter-spacing:0.055px;transform:scaleX(1.1000);">12</span>
<span class="t" style="left:652.66px;top:342.72px;font-size:8.3px;line-height:12.3px;color:#111;-webkit-text-stroke:0.1px #111;transform:scaleX(1.1000);">12,00</span>
<span class="t" style="left:739.66px;top:342.72px;font-size:8.3px;line-height:12.3px;color:#111;-webkit-text-stroke:0.1px #111;transform:scaleX(1.1000);">90,00</span>
<span class="t" style="left:823.57px;top:342.72px;font-size:8.3px;line-height:12.3px;color:#111;-webkit-text-stroke:0.1px #111;transform:scaleX(1.1000);">750,00</span>
<span class="t" style="left:869.70px;top:343.62px;font-size:9.6px;line-height:13.6px;color:#111;-webkit-text-stroke:0.15px #111;letter-spacing:0.732px;transform:scaleX(1.1000);">Mostrar</span>
<span class="t" style="left:981.66px;top:342.72px;font-size:8.3px;line-height:12.3px;color:#111;-webkit-text-stroke:0.1px #111;transform:scaleX(1.1000);">1,000</span>
<span class="t" style="left:40.15px;top:364.62px;font-size:9.6px;line-height:13.6px;color:#111;-webkit-text-stroke:0.15px #111;transform:scaleX(1.1400);">8</span>
<span class="t" style="left:56.50px;top:364.62px;font-size:9.6px;line-height:13.6px;color:#111;-webkit-text-stroke:0.15px #111;letter-spacing:0.900px;transform:scaleX(1.1400);">C01</span>
<span class="t" style="left:203.50px;top:364.62px;font-size:9.6px;line-height:13.6px;color:#111;-webkit-text-stroke:0.15px #111;letter-spacing:0.386px;transform:scaleX(1.1000);">AlcdCent</span>
<span class="t" style="left:312.66px;top:364.72px;font-size:8.3px;line-height:12.3px;color:#111;-webkit-text-stroke:0.1px #111;transform:scaleX(1.1000);">1,000</span>
<span class="t" style="left:408.97px;top:364.72px;font-size:8.3px;line-height:12.3px;color:#111;-webkit-text-stroke:0.1px #111;transform:scaleX(1.1000);">2.350,00</span>
<span class="t" style="left:523.73px;top:364.72px;font-size:8.3px;line-height:12.3px;color:#111;-webkit-text-stroke:0.1px #111;transform:scaleX(1.1000);">2,50</span>
<span class="t" style="left:544.50px;top:364.62px;font-size:9.6px;line-height:13.6px;color:#111;-webkit-text-stroke:0.15px #111;letter-spacing:0.055px;transform:scaleX(1.1000);">12</span>
<span class="t" style="left:652.66px;top:364.72px;font-size:8.3px;line-height:12.3px;color:#111;-webkit-text-stroke:0.1px #111;transform:scaleX(1.1000);">12,00</span>
<span class="t" style="left:734.57px;top:364.72px;font-size:8.3px;line-height:12.3px;color:#111;-webkit-text-stroke:0.1px #111;transform:scaleX(1.1000);">274,95</span>
<span class="t" style="left:815.97px;top:364.72px;font-size:8.3px;line-height:12.3px;color:#111;-webkit-text-stroke:0.1px #111;transform:scaleX(1.1000);">2.291,25</span>
<span class="t" style="left:869.70px;top:365.62px;font-size:9.6px;line-height:13.6px;color:#111;-webkit-text-stroke:0.15px #111;letter-spacing:0.732px;transform:scaleX(1.1000);">Mostrar</span>
<span class="t" style="left:981.66px;top:364.72px;font-size:8.3px;line-height:12.3px;color:#111;-webkit-text-stroke:0.1px #111;transform:scaleX(1.1000);">1,000</span>
<span class="t" style="left:40.15px;top:385.62px;font-size:9.6px;line-height:13.6px;color:#111;-webkit-text-stroke:0.15px #111;transform:scaleX(1.1400);">9</span>
<span class="t" style="left:56.50px;top:385.62px;font-size:9.6px;line-height:13.6px;color:#111;-webkit-text-stroke:0.15px #111;letter-spacing:0.900px;transform:scaleX(1.1400);">05052039</span>
<span class="t" style="left:203.50px;top:385.62px;font-size:9.6px;line-height:13.6px;color:#111;-webkit-text-stroke:0.15px #111;letter-spacing:0.386px;transform:scaleX(1.1000);">AlcdCent</span>
<span class="t" style="left:312.66px;top:385.72px;font-size:8.3px;line-height:12.3px;color:#111;-webkit-text-stroke:0.1px #111;transform:scaleX(1.1000);">1,000</span>
<span class="t" style="left:416.57px;top:385.72px;font-size:8.3px;line-height:12.3px;color:#111;-webkit-text-stroke:0.1px #111;transform:scaleX(1.1000);">750,00</span>
<span class="t" style="left:523.73px;top:385.72px;font-size:8.3px;line-height:12.3px;color:#111;-webkit-text-stroke:0.1px #111;transform:scaleX(1.1000);">0,00</span>
<span class="t" style="left:544.50px;top:385.62px;font-size:9.6px;line-height:13.6px;color:#111;-webkit-text-stroke:0.15px #111;letter-spacing:0.055px;transform:scaleX(1.1000);">12</span>
<span class="t" style="left:652.66px;top:385.72px;font-size:8.3px;line-height:12.3px;color:#111;-webkit-text-stroke:0.1px #111;transform:scaleX(1.1000);">12,00</span>
<span class="t" style="left:739.66px;top:385.72px;font-size:8.3px;line-height:12.3px;color:#111;-webkit-text-stroke:0.1px #111;transform:scaleX(1.1000);">90,00</span>
<span class="t" style="left:823.57px;top:385.72px;font-size:8.3px;line-height:12.3px;color:#111;-webkit-text-stroke:0.1px #111;transform:scaleX(1.1000);">750,00</span>
<span class="t" style="left:869.70px;top:386.62px;font-size:9.6px;line-height:13.6px;color:#111;-webkit-text-stroke:0.15px #111;letter-spacing:0.732px;transform:scaleX(1.1000);">Mostrar</span>
<span class="t" style="left:981.66px;top:385.72px;font-size:8.3px;line-height:12.3px;color:#111;-webkit-text-stroke:0.1px #111;transform:scaleX(1.1000);">1,000</span>
<span class="t" style="left:37.12px;top:407.62px;font-size:9.6px;line-height:13.6px;color:#111;-webkit-text-stroke:0.15px #111;transform:scaleX(1.1400);">10</span>
<span class="t" style="left:56.50px;top:407.62px;font-size:9.6px;line-height:13.6px;color:#111;-webkit-text-stroke:0.15px #111;letter-spacing:0.900px;transform:scaleX(1.1400);">00000053</span>
<span class="t" style="left:203.50px;top:407.62px;font-size:9.6px;line-height:13.6px;color:#111;-webkit-text-stroke:0.15px #111;letter-spacing:0.386px;transform:scaleX(1.1000);">AlcdCent</span>
<span class="t" style="left:312.66px;top:407.72px;font-size:8.3px;line-height:12.3px;color:#111;-webkit-text-stroke:0.1px #111;transform:scaleX(1.1000);">1,000</span>
<span class="t" style="left:416.57px;top:407.72px;font-size:8.3px;line-height:12.3px;color:#111;-webkit-text-stroke:0.1px #111;transform:scaleX(1.1000);">675,00</span>
<span class="t" style="left:523.73px;top:407.72px;font-size:8.3px;line-height:12.3px;color:#111;-webkit-text-stroke:0.1px #111;transform:scaleX(1.1000);">1,50</span>
<span class="t" style="left:544.50px;top:407.62px;font-size:9.6px;line-height:13.6px;color:#111;-webkit-text-stroke:0.15px #111;letter-spacing:0.055px;transform:scaleX(1.1000);">12</span>
<span class="t" style="left:652.66px;top:407.72px;font-size:8.3px;line-height:12.3px;color:#111;-webkit-text-stroke:0.1px #111;transform:scaleX(1.1000);">12,00</span>
<span class="t" style="left:739.66px;top:407.72px;font-size:8.3px;line-height:12.3px;color:#111;-webkit-text-stroke:0.1px #111;transform:scaleX(1.1000);">79,78</span>
<span class="t" style="left:823.57px;top:407.72px;font-size:8.3px;line-height:12.3px;color:#111;-webkit-text-stroke:0.1px #111;transform:scaleX(1.1000);">664,87</span>
<span class="t" style="left:869.70px;top:408.62px;font-size:9.6px;line-height:13.6px;color:#111;-webkit-text-stroke:0.15px #111;letter-spacing:0.732px;transform:scaleX(1.1000);">Mostrar</span>
<span class="t" style="left:981.66px;top:407.72px;font-size:8.3px;line-height:12.3px;color:#111;-webkit-text-stroke:0.1px #111;transform:scaleX(1.1000);">1,000</span>
<span class="t" style="left:80.50px;top:448.96px;font-size:9.2px;line-height:13.2px;color:#111;-webkit-text-stroke:0.15px #111;letter-spacing:-0.054px;transform:scaleX(1.1000);">Bateria Celular Nokia</span>
<span class="t" style="left:157.23px;top:467.72px;font-size:8.3px;line-height:12.3px;color:#262626;-webkit-text-stroke:0.1px #262626;transform:scaleX(1.1000);">0,00</span>
<span class="t" style="left:555.03px;top:467.72px;font-size:8.3px;line-height:12.3px;color:#262626;-webkit-text-stroke:0.1px #262626;transform:scaleX(1.1000);">0,00</span>
<span class="t" style="left:157.23px;top:487.72px;font-size:8.3px;line-height:12.3px;color:#262626;-webkit-text-stroke:0.1px #262626;transform:scaleX(1.1000);">0,00</span>
<span class="t" style="left:555.03px;top:487.72px;font-size:8.3px;line-height:12.3px;color:#262626;-webkit-text-stroke:0.1px #262626;transform:scaleX(1.1000);">0,00</span>
<span class="t" style="left:157.23px;top:507.72px;font-size:8.3px;line-height:12.3px;color:#262626;-webkit-text-stroke:0.1px #262626;transform:scaleX(1.1000);">0,00</span>
<span class="t" style="left:555.03px;top:507.72px;font-size:8.3px;line-height:12.3px;color:#262626;-webkit-text-stroke:0.1px #262626;transform:scaleX(1.1000);">0,00</span>
<span class="t" style="left:436.43px;top:467.72px;font-size:8.3px;line-height:12.3px;color:#262626;-webkit-text-stroke:0.1px #262626;transform:scaleX(1.1000);">0,000000</span>
<span class="t" style="left:436.43px;top:487.72px;font-size:8.3px;line-height:12.3px;color:#262626;-webkit-text-stroke:0.1px #262626;transform:scaleX(1.1000);">0,000000</span>
<span class="t" style="left:696.70px;top:447.44px;font-size:11px;line-height:15px;color:#111;letter-spacing:0.414px;transform:scaleX(1.1000);">31,000</span>
<span class="t" style="left:895.20px;top:467.72px;font-size:8.3px;line-height:12.3px;color:#333333;-webkit-text-stroke:0.08px #333333;transform:scaleX(1.1186);">87.168,62</span>
<span class="t" style="left:895.20px;top:487.72px;font-size:8.3px;line-height:12.3px;color:#333333;-webkit-text-stroke:0.08px #333333;transform:scaleX(1.1186);">10.460,23</span>
<span class="t" style="left:895.20px;top:507.72px;font-size:8.3px;line-height:12.3px;color:#333333;-webkit-text-stroke:0.08px #333333;transform:scaleX(1.1186);">97.628,85</span>
<span class="t" style="left:26.50px;top:722.62px;font-size:9.6px;line-height:13.6px;color:#0d47a1;-webkit-text-stroke:0.05px #0d47a1;letter-spacing:0.855px;transform:scaleX(1.1000);">Agregar</span>
<span class="t" style="left:104.00px;top:722.62px;font-size:9.6px;line-height:13.6px;color:#6a6a6a;letter-spacing:0.642px;transform:scaleX(1.1000);">Editar</span>
<span class="t" style="left:184.70px;top:722.62px;font-size:9.6px;line-height:13.6px;color:#0d47a1;-webkit-text-stroke:0.05px #0d47a1;letter-spacing:0.501px;transform:scaleX(1.1000);">Buscar</span>
<span class="t" style="left:263.40px;top:722.62px;font-size:9.6px;line-height:13.6px;color:#6a6a6a;letter-spacing:0.750px;transform:scaleX(1.1000);">Eliminar</span>
<span class="t" style="left:342.70px;top:722.62px;font-size:9.6px;line-height:13.6px;color:#0d47a1;-webkit-text-stroke:0.05px #0d47a1;letter-spacing:1.000px;transform:scaleX(1.1335);">Imprimir</span>
<span class="t" style="left:476.80px;top:722.62px;font-size:9.6px;line-height:13.6px;color:#6a6a6a;letter-spacing:0.638px;transform:scaleX(1.1000);">Aceptar</span>
<span class="t" style="left:555.70px;top:722.62px;font-size:9.6px;line-height:13.6px;color:#6a6a6a;letter-spacing:0.682px;transform:scaleX(1.1000);">Cancelar</span>
<div class="red" style="left:8px;top:52px;width:588px;height:43px;"></div>
<div class="red" style="left:6px;top:109px;width:591px;height:24px;"></div>
<div class="red" style="left:28px;top:207px;width:981px;height:219px;"></div>
<svg style="left:568.4px;top:57.4px" width="12" height="12" viewBox="0 0 12 12" ><circle cx="4.2" cy="4.3" r="3.4" fill="none" stroke="#333" stroke-width="1.15"/><path d="M6.7 6.8L10.4 10.6" stroke="#333" stroke-width="1.45" stroke-linecap="round"/></svg>
<svg style="left:568.4px;top:95.4px" width="12" height="12" viewBox="0 0 12 12" ><circle cx="4.2" cy="4.3" r="3.4" fill="none" stroke="#333" stroke-width="1.15"/><path d="M6.7 6.8L10.4 10.6" stroke="#333" stroke-width="1.45" stroke-linecap="round"/></svg>
<svg style="left:273.4px;top:76.4px" width="12" height="12" viewBox="0 0 12 12" ><circle cx="4.2" cy="4.3" r="3.4" fill="none" stroke="#333" stroke-width="1.15"/><path d="M6.7 6.8L10.4 10.6" stroke="#333" stroke-width="1.45" stroke-linecap="round"/></svg>
<svg style="left:273.4px;top:95.4px" width="12" height="12" viewBox="0 0 12 12" ><circle cx="4.2" cy="4.3" r="3.4" fill="none" stroke="#333" stroke-width="1.15"/><path d="M6.7 6.8L10.4 10.6" stroke="#333" stroke-width="1.45" stroke-linecap="round"/></svg>
<svg style="left:427px;top:77px" width="11" height="11" viewBox="0 0 11 11" ><path d="M2.6 0V2M8.4 0V2" stroke="#333" stroke-width="1.4"/><rect x="0.7" y="1.6" width="9.6" height="8.8" rx="1.2" fill="none" stroke="#333" stroke-width="1.3"/><rect x="0.7" y="1.6" width="9.6" height="2.4" fill="#333"/><rect x="5.8" y="6.2" width="2.4" height="2.4" fill="#333"/></svg>
<svg style="left:562.6px;top:77px" width="11" height="11" viewBox="0 0 11 11" ><path d="M2.6 0V2M8.4 0V2" stroke="#333" stroke-width="1.4"/><rect x="0.7" y="1.6" width="9.6" height="8.8" rx="1.2" fill="none" stroke="#333" stroke-width="1.3"/><rect x="0.7" y="1.6" width="9.6" height="2.4" fill="#333"/><rect x="5.8" y="6.2" width="2.4" height="2.4" fill="#333"/></svg>
<div style="left:835px;top:152px;width:12px;height:26px;background:#ededed;border-radius:2px"></div>
<svg style="left:835px;top:152px" width="25" height="26" viewBox="0 0 25 26" ><g stroke="#6a6a6a" stroke-width="1.35" fill="none" stroke-linecap="round" stroke-linejoin="round"><path d="M1.5 6H10M5 2.5L1.5 6L5 9.5"/><path d="M14 6H23M19.5 2.5L23 6L19.5 9.5"/><path d="M0.8 15.8V23.2M2.5 19.5H10.5M5.8 16L2.5 19.5L5.8 23"/><path d="M13.5 19.5H22M18.7 16L22 19.5L18.7 23M23.7 15.8V23.2"/></g></svg>
<svg style="left:868px;top:157px" width="16" height="16" viewBox="0 0 16 16" ><circle cx="8" cy="8" r="7.2" fill="none" stroke="#333" stroke-width="1.2"/><path d="M10.4 5.9C10.1 4.9 9.2 4.5 8 4.5C6.6 4.5 5.7 5.1 5.7 6.1C5.7 8.6 10.5 7.2 10.5 9.8C10.5 10.9 9.5 11.5 8 11.5C6.6 11.5 5.7 11 5.4 9.9M8 3.2V12.8" fill="none" stroke="#333" stroke-width="1.3"/></svg>
<svg style="left:895px;top:158.5px" width="17" height="13" viewBox="0 0 17 13" ><path d="M16.6 5.2L10.6 0.4V3.2C5.2 3.6 1.4 6.8 0.3 11.4C2.8 8.4 6.2 7 10.6 7V9.9Z" fill="#333"/></svg>
<svg style="left:920px;top:156.5px" width="18" height="17" viewBox="0 0 18 17" ><path d="M7.2 4.1C6.2 2.6 7 1.2 8.4 1.2C9.8 1.2 10.6 2.6 9.6 4.1H12.2V7.6C13.7 6.6 15.9 7.2 15.9 9.2C15.9 11.2 13.7 11.8 12.2 10.8V14.9H1.5V11.3C3.2 12 4.6 11.2 4.6 9.9C4.6 8.6 3.2 7.8 1.5 8.5V4.1Z" fill="none" stroke="#333" stroke-width="1.3" stroke-linejoin="round"/></svg>
<div style="left:943px;top:152px;width:4px;height:26px;background:#1976d2;border-radius:2px"></div>
<div style="left:949.5px;top:153px;width:24.5px;height:24.5px;background:#f1f1f1;border-radius:2px"></div>
<svg style="left:953px;top:156px" width="18" height="18" viewBox="0 0 18 18" ><path d="M13.6 5.2A6 6 0 1 0 14.8 9" fill="none" stroke="#666" stroke-width="1.7"/><path d="M15.4 2.2V7.4H10.2Z" fill="#666"/></svg>
<svg style="left:980px;top:156px" width="16" height="17" viewBox="0 0 16 17" ><g fill="none" stroke="#333" stroke-width="1.5" stroke-linejoin="round"><path d="M4 3.4V1.2H14V15.8H4V13.6"/><path d="M0.8 6.2H10M0.8 11H10"/></g><path d="M8.2 3.9L11.6 6.2L8.2 8.5ZM8.2 8.7L11.6 11L8.2 13.3Z" fill="#333"/></svg>
<svg style="left:1004px;top:156px" width="22" height="17" viewBox="0 0 22 17" ><g fill="none" stroke="#333" stroke-width="1.5" stroke-linejoin="round"><path d="M11 3.4V1.2H1.8V15.8H11V13.6"/><path d="M8 6.2H18.5M8 11H18.5"/></g><path d="M16.6 3.9L20.2 6.2L16.6 8.5ZM16.6 8.7L20.2 11L16.6 13.3Z" fill="#333"/></svg>
<svg style="left:7px;top:719px" width="17" height="20" viewBox="0 0 17 20" ><path d="M12.9 11.5V3.2A1.6 1.6 0 0 0 11.3 1.6H2.4A1.6 1.6 0 0 0 0.8 3.2V13.9A1.6 1.6 0 0 0 2.4 15.5H9" fill="none" stroke="#333" stroke-width="1.5"/><path d="M12.9 12.2V18.8M9.6 15.5H16.2" stroke="#333" stroke-width="1.5"/></svg>
<svg style="left:86px;top:719px" width="17" height="18" viewBox="0 0 17 18" ><path d="M12.6 7V3.2A1.6 1.6 0 0 0 11 1.6H2.6A1.6 1.6 0 0 0 1 3.2V14.4A1.6 1.6 0 0 0 2.6 16H6" fill="none" stroke="#666" stroke-width="1.4"/><path d="M7.6 16.6L8.2 14L13.8 8.4L15.6 10.2L10 15.8Z" fill="#666"/></svg>
<svg style="left:165px;top:719px" width="17" height="20" viewBox="0 0 17 20" ><path d="M13 8V3.2A1.6 1.6 0 0 0 11.4 1.6H2.4A1.6 1.6 0 0 0 0.8 3.2V13.9A1.6 1.6 0 0 0 2.4 15.5H6" fill="none" stroke="#333" stroke-width="1.5"/><circle cx="10.2" cy="13.4" r="2.9" fill="none" stroke="#333" stroke-width="1.4"/><path d="M12.4 15.6L15.4 18.6" stroke="#333" stroke-width="1.6" stroke-linecap="round"/></svg>
<svg style="left:244px;top:720px" width="16" height="17" viewBox="0 0 16 17" ><g fill="none" stroke="#666" stroke-width="1.3"><path d="M5.4 2.2V0.8H10.6V2.2"/><rect x="0.8" y="2.4" width="14.4" height="2.6" rx="1.2"/><path d="M2.6 5.2V14.4A1.4 1.4 0 0 0 4 15.8H12A1.4 1.4 0 0 0 13.4 14.4V5.2"/></g><path d="M5.4 7.4V13.4M8 7.4V13.4M10.6 7.4V13.4" stroke="#666" stroke-width="1.2"/></svg>
<svg style="left:322.6px;top:720px" width="17" height="17" viewBox="0 0 17 17" ><g fill="none" stroke="#444" stroke-width="1.2"><rect x="3.8" y="0.8" width="9.4" height="3.6"/><rect x="0.8" y="4.4" width="15.4" height="8" rx="1.6"/><rect x="3.8" y="9.6" width="9.4" height="5.8" fill="#fdfdfd"/></g><path d="M5 11.6H12M5 13.4H12" stroke="#888" stroke-width="0.9"/><rect x="13" y="6.2" width="1.4" height="1.2" fill="#444"/></svg>
<svg style="left:395px;top:721px" width="17" height="14" viewBox="0 0 17 14" ><path d="M1 7L8.5 1.6L16 7M1 12.8L8.5 7.4L16 12.8" fill="none" stroke="#333" stroke-width="1.5"/></svg>
<svg style="left:457px;top:722px" width="17" height="12" viewBox="0 0 17 12" ><path d="M1.2 6.8L6.6 10.6L15 1.2" fill="none" stroke="#555" stroke-width="1.5"/></svg>
<svg style="left:537px;top:721px" width="14" height="14" viewBox="0 0 14 14" ><path d="M1 1L13.2 13.2M13.2 1L1 13.2" fill="none" stroke="#555" stroke-width="1.5"/></svg>
</body></html>
